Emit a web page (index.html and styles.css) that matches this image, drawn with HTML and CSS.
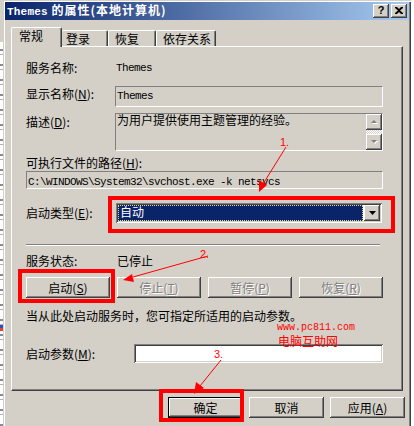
FILE: index.html
```html
<!DOCTYPE html>
<html lang="zh-CN">
<head>
<meta charset="utf-8">
<title>Themes 的属性</title>
<link rel="stylesheet" href="styles.css">
</head>
<body>
<div class="strip"></div>
<div class="window">
  <div class="titlebar">
    <span class="title"><span class="tm">Themes</span> 的属性(本地计算机)</span>
    <div class="tbtns">
      <span class="tbtn help">?</span>
      <span class="tbtn close"><svg width="8" height="7" viewBox="0 0 8 7"><path d="M0 0h2l2 2 2-2h2v1L5 3.5 8 6v1H6L4 5 2 7H0V6l3-2.5L0 1z" fill="#000"/></svg></span>
    </div>
  </div>
  <div class="tabs">
    <div class="tab sel">常规</div>
    <div class="tab t2">登录</div>
    <div class="tab t3">恢复</div>
    <div class="tab t4">依存关系</div>
  </div>
  <div class="panel">
    <div class="row r-name"><span class="lbl w90">服务名称:</span><span class="m">Themes</span></div>
    <div class="row r-disp"><span class="lbl w89 mt2">显示名称(<u>N</u>):</span><div class="field disp"><span class="m">Themes</span></div></div>
    <div class="row r-desc"><span class="lbl w89 mt3">描述(<u>D</u>):</span>
      <div class="field desc">
        <div class="desc-text">为用户提供使用主题管理的经验。</div>
        <div class="sbar">
          <div class="sbtn"><svg width="7" height="5" viewBox="0 0 7 5"><path d="M4 1l3 3H1z" fill="#fff"/><path d="M3 0l3 3H0z" fill="#808080"/></svg></div>
          <div class="strack"></div>
          <div class="sbtn"><svg width="7" height="5" viewBox="0 0 7 5"><path d="M1 1h6L4 4z" fill="#fff"/><path d="M0 0h6L3 3z" fill="#808080"/></svg></div>
        </div>
      </div>
    </div>
    <div class="plabel">可执行文件的路径(<u>H</u>):</div>
    <div class="field path"><span class="m">C:\WINDOWS\System32\svchost.exe -k netsvcs</span></div>
    <div class="row r-type"><span class="lbl w90 mt4">启动类型(<u>E</u>):</span>
      <div class="select">
        <div class="sel-val">自动</div>
        <div class="ddbtn"><svg width="7" height="4" viewBox="0 0 7 4"><path d="M0 0h7L3.5 4z" fill="#000"/></svg></div>
      </div>
    </div>
    <div class="sep"></div>
    <div class="row r-status"><span class="lbl w91">服务状态:</span><span>已停止</span></div>
    <div class="btnrow">
      <div class="btn">启动(<u>S</u>)</div>
      <div class="btn dis">停止(<u>T</u>)</div>
      <div class="btn dis">暂停(<u>P</u>)</div>
      <div class="btn dis">恢复(<u>R</u>)</div>
    </div>
    <div class="hint">当从此处启动服务时，您可指定所适用的启动参数。</div>
    <div class="row r-param"><span class="lbl w108 mt4">启动参数(<u>M</u>):</span><div class="field param"></div></div>
  </div>
  <div class="actions">
    <div class="btn def">确定</div>
    <div class="btn">取消</div>
    <div class="btn">应用(<u>A</u>)</div>
  </div>
</div>
<svg class="annot" width="414" height="426" viewBox="0 0 414 426">
  <g fill="none" stroke="#ff0000" stroke-width="4">
    <rect x="110" y="198" width="283" height="33"/>
    <rect x="20" y="271" width="93" height="30"/>
    <rect x="161" y="391" width="81" height="29"/>
  </g>
  <g stroke="#ff0000" stroke-width="1" fill="#ff0000">
    <line x1="286" y1="147" x2="263" y2="184"/>
    <path d="M259 192 L259 180 L267 185 Z" stroke="none"/>
    <line x1="208" y1="256" x2="133" y2="277"/>
    <path d="M123 280 L132 274 L134 282 Z" stroke="none"/>
    <line x1="221" y1="360" x2="200" y2="386"/>
    <path d="M194 394 L196 382 L204 388 Z" stroke="none"/>
  </g>
  <g fill="#ff0000" class="atext">
    <text x="280" y="146">1.</text>
    <text x="200" y="258">2.</text>
    <text x="214" y="358">3.</text>
  </g>
  <text class="wm1" x="277" y="330">www.pc811.com</text>
  <text class="wm2" x="278" y="346">电脑互助网</text>
</svg>
</body>
</html>
```

FILE: styles.css
```css
html, body {
  margin: 0;
  padding: 0;
}
body {
  width: 414px;
  height: 426px;
  overflow: hidden;
  background: #fff;
  display: flex;
  align-items: flex-start;
  position: relative;
  font: 12px/12px "Noto Sans CJK SC", "Noto Sans", sans-serif;
  color: #000;
}
u { text-decoration: underline; text-underline-offset: 1px; }

.strip {
  width: 3px;
  height: 426px;
  flex: none;
  background:
    linear-gradient(#d4d0c8 0 42px, transparent 42px),
    linear-gradient(transparent 325px, #3050c0 325px 328px, #e04040 328px 331px, transparent 331px),
    repeating-linear-gradient(#fff 0 4px, #8a8a9a 4px 6px, #fff 6px 9px, #b0b0b8 9px 10px, #fff 10px 15px);
}

.window {
  width: 408px;
  height: 426px;
  flex: none;
  box-sizing: border-box;
  background: #d4d0c8;
  padding: 2px 2px 0 2px;
  box-shadow: inset 1px 1px #d4d0c8, inset 2px 2px #fff, inset -1px 0 #404040, inset -2px 0 #808080;
}

.titlebar {
  height: 18px;
  background: linear-gradient(to right, #0a246a, #a6caf0);
  display: flex;
  align-items: center;
  justify-content: space-between;
  padding: 0 2px 0 2px;
}
.title {
  color: #fff;
  font-weight: bold;
  font-size: 12px;
  letter-spacing: 1px;
  white-space: nowrap;
}
.tm {
  font-family: "Liberation Mono", monospace;
  font-size: 11px;
  letter-spacing: 0.2px;
}
.tbtns { display: flex; gap: 2px; }
.tbtn {
  width: 16px;
  height: 14px;
  box-sizing: border-box;
  background: #d4d0c8;
  box-shadow: inset -1px -1px #404040, inset 1px 1px #fff, inset -2px -2px #808080;
  display: flex;
  align-items: center;
  justify-content: center;
  color: #000;
  font: bold 11px/11px "Liberation Sans", sans-serif;
  padding-bottom: 1px;
}

.tabs {
  display: flex;
  align-items: flex-end;
  margin: 7px 0 0 6px;
  height: 19px;
  position: relative;
  z-index: 1;
}
.tab {
  height: 16px;
  box-sizing: border-box;
  border-top: 1px solid #fff;
  border-left: 1px solid #fff;
  border-right: 1px solid #404040;
  box-shadow: inset -1px 0 #808080;
  border-radius: 2px 2px 0 0;
  padding-top: 2px;
  line-height: 12px;
  white-space: nowrap;
}
.tab.sel {
  width: 51px;
  height: 20px;
  margin-bottom: -1px;
  padding-left: 7px;
  background: #d4d0c8;
}
.tab.t2 { width: 46px; padding-left: 4px; border-left: none; }
.tab.t3 { width: 48px; padding-left: 6px; }
.tab.t4 { width: 60px; padding-left: 6px; }

.panel {
  margin-left: 6px;
  width: 392px;
  height: 345px;
  box-sizing: border-box;
  border-top: 1px solid #fff;
  border-left: 1px solid #fff;
  border-right: 1px solid #404040;
  border-bottom: 1px solid #404040;
  box-shadow: inset -1px -1px #808080;
  padding: 15px 0 0 14px;
}
.row { display: flex; align-items: flex-start; }
.lbl { flex: none; white-space: nowrap; }
.w89 { width: 89px; }
.w90 { width: 90px; }
.w91 { width: 91px; }
.w108 { width: 108px; }
.mt2 { margin-top: 2px; }
.mt3 { margin-top: 3px; }
.mt4 { margin-top: 4px; }

.m {
  font-family: "Liberation Mono", monospace;
  font-size: 11px;
  letter-spacing: -0.6px;
  white-space: pre;
}

.field {
  box-sizing: border-box;
  background: #d4d0c8;
  border-top: 1px solid #808080;
  border-left: 1px solid #808080;
  border-bottom: 1px solid #fff;
  border-right: 1px solid #fff;
}
.r-disp { margin-top: 12px; }
.disp {
  width: 268px;
  height: 21px;
  padding: 1px 0 0 1px;
  line-height: 12px;
}
.r-desc { margin-top: 6px; }
.desc {
  width: 268px;
  height: 38px;
  display: flex;
}
.desc-text {
  flex: 1;
  padding: 0 0 0 1px;
  line-height: 12px;
}
.sbar {
  width: 16px;
  display: flex;
  flex-direction: column;
}
.sbtn {
  height: 16px;
  background: #d4d0c8;
  box-shadow: inset -1px -1px #404040, inset 1px 1px #fff, inset -2px -2px #808080;
  display: flex;
  align-items: center;
  justify-content: center;
}
.strack {
  height: 4px;
  background: repeating-conic-gradient(#fff 0 25%, #d4d0c8 0 50%) 0 0 / 2px 2px;
}
.plabel { margin-top: 6px; }
.path {
  margin-top: 2px;
  width: 357px;
  height: 18px;
  line-height: 15px;
  padding-left: 1px;
}
.r-type { margin-top: 14px; }
.select {
  width: 266px;
  height: 20px;
  box-sizing: border-box;
  background: #fff;
  padding: 2px;
  box-shadow: inset 1px 1px #808080, inset -1px -1px #fff, inset 2px 2px #404040, inset -2px -2px #d4d0c8;
  display: flex;
}
.sel-val {
  flex: 1;
  background: #0a246a;
  color: #fff;
  border: 1px dotted #e8d890;
  line-height: 12px;
  padding-left: 1px;
  margin-right: 1px;
}
.ddbtn {
  width: 16px;
  background: #d4d0c8;
  box-shadow: inset -1px -1px #404040, inset 1px 1px #fff, inset -2px -2px #808080;
  display: flex;
  align-items: center;
  justify-content: center;
}
.sep {
  margin-top: 21px;
  width: 354px;
  border-top: 1px solid #808080;
  border-bottom: 1px solid #fff;
}
.r-status { margin-top: 9px; }
.btnrow {
  margin-top: 10px;
  display: flex;
  gap: 7px;
}
.btn {
  height: 21px;
  box-sizing: border-box;
  background: #d4d0c8;
  box-shadow: inset -1px -1px #404040, inset 1px 1px #fff, inset -2px -2px #808080;
  display: flex;
  align-items: center;
  justify-content: center;
  white-space: nowrap;
}
.btnrow .btn { width: 84px; }
.btn.dis { color: #808080; text-shadow: 1px 1px #fff; }
.hint { margin-top: 12px; white-space: nowrap; }
.r-param { margin-top: 22px; }
.param {
  width: 249px;
  height: 19px;
  background: #fff;
  border: none;
  box-shadow: inset 1px 1px #808080, inset -1px -1px #fff, inset 2px 2px #404040, inset -2px -2px #d4d0c8;
}

.actions {
  margin-top: 6px;
  display: flex;
  justify-content: flex-end;
  gap: 6px;
  padding-right: 4px;
}
.actions .btn { width: 75px; }
.btn.def {
  box-shadow: inset 0 0 0 1px #000, inset -2px -2px #404040, inset 2px 2px #fff, inset -3px -3px #808080;
}

.annot {
  position: absolute;
  left: 0;
  top: 0;
  pointer-events: none;
}
.atext { font: 11px "Liberation Sans", sans-serif; }
.wm1 { font: 10px "Liberation Mono", monospace; fill: #ff0000; }
.wm2 { font: 12px "Noto Sans CJK SC", sans-serif; fill: #ff0000; }
```
